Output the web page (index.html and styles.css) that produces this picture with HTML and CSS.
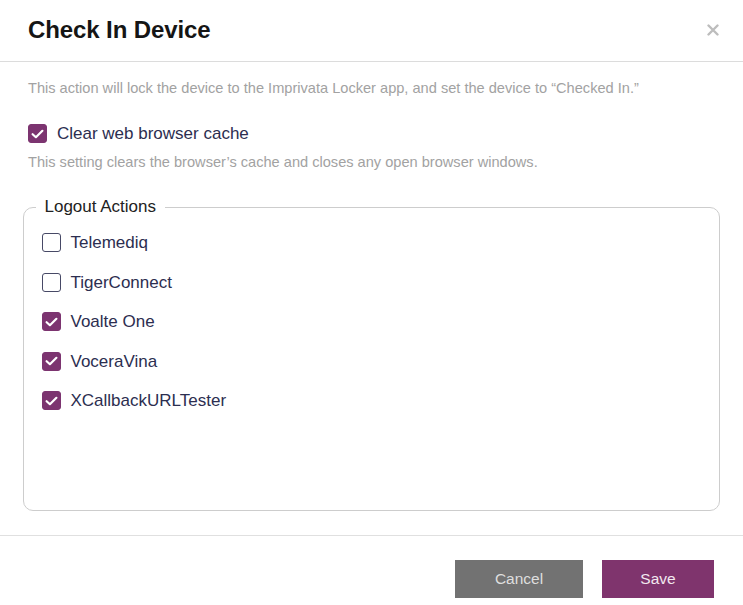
FILE: index.html
```html
<!DOCTYPE html>
<html lang="en">
<head>
<meta charset="utf-8">
<title>Check In Device</title>
<link rel="stylesheet" href="styles.css">
</head>
<body>
<div class="dialog">
  <header class="header">
    <h1 class="title">Check In Device</h1>
    <button class="close" aria-label="Close">
      <svg width="12" height="12" viewBox="0 0 12 12"><path d="M1.5 1.5 L10.5 10.5 M10.5 1.5 L1.5 10.5" stroke="#bdbdbd" stroke-width="2.4" stroke-linecap="round"/></svg>
    </button>
  </header>
  <main class="content">
    <p class="note note-top">This action will lock the device to the Imprivata Locker app, and set the device to “Checked In.”</p>
    <label class="check top-check">
      <span class="box checked"><svg width="13" height="10" viewBox="0 0 13 10"><path d="M1.6 5.2 L4.9 8.2 L11.4 1.8" fill="none" stroke="#fff" stroke-width="2.2" stroke-linecap="round" stroke-linejoin="round"/></svg></span>
      <span class="label">Clear web browser cache</span>
    </label>
    <p class="note note-help">This setting clears the browser’s cache and closes any open browser windows.</p>
    <fieldset class="group">
      <legend class="legend">Logout Actions</legend>
      <div class="list">
        <label class="check"><span class="box"></span><span class="label">Telemediq</span></label>
        <label class="check"><span class="box"></span><span class="label">TigerConnect</span></label>
        <label class="check"><span class="box checked"><svg width="13" height="10" viewBox="0 0 13 10"><path d="M1.6 5.2 L4.9 8.2 L11.4 1.8" fill="none" stroke="#fff" stroke-width="2.2" stroke-linecap="round" stroke-linejoin="round"/></svg></span><span class="label">Voalte One</span></label>
        <label class="check"><span class="box checked"><svg width="13" height="10" viewBox="0 0 13 10"><path d="M1.6 5.2 L4.9 8.2 L11.4 1.8" fill="none" stroke="#fff" stroke-width="2.2" stroke-linecap="round" stroke-linejoin="round"/></svg></span><span class="label">VoceraVina</span></label>
        <label class="check"><span class="box checked"><svg width="13" height="10" viewBox="0 0 13 10"><path d="M1.6 5.2 L4.9 8.2 L11.4 1.8" fill="none" stroke="#fff" stroke-width="2.2" stroke-linecap="round" stroke-linejoin="round"/></svg></span><span class="label">XCallbackURLTester</span></label>
      </div>
    </fieldset>
  </main>
  <footer class="footer">
    <button class="btn btn-cancel">Cancel</button>
    <button class="btn btn-save">Save</button>
  </footer>
</div>
</body>
</html>
```
FILE: styles.css
```css
* { box-sizing: border-box; }
html, body { margin: 0; padding: 0; background: #fff; }
body { font-family: "Liberation Sans", Arial, sans-serif; }
.dialog { width: 743px; height: 605px; background: #fff; }

.header {
  height: 62px;
  border-bottom: 1px solid #dcdcdc;
  display: flex;
  align-items: center;
  justify-content: space-between;
  padding: 0 24px 2px 28px;
}
.title {
  margin: 0;
  font-size: 24px;
  font-weight: bold;
  color: #151515;
  letter-spacing: -0.1px;
}
.close {
  border: 0;
  background: none;
  padding: 0;
  width: 12px;
  height: 12px;
  display: flex;
  cursor: pointer;
}

.content { padding: 17px 23px 0 28px; }
.note {
  margin: 0;
  font-size: 14.6px;
  line-height: 18px;
  color: #a2a2a2;
}
.top-check { margin-top: 27px; }
.note-help { margin-top: 10px; }

.check {
  display: flex;
  align-items: center;
  height: 19px;
  gap: 10px;
}
.box {
  width: 19px;
  height: 19px;
  border: 1.5px solid #474966;
  border-radius: 3px;
  display: flex;
  align-items: center;
  justify-content: center;
  flex: none;
  background: #fff;
}
.box.checked { background: #7c3470; border-color: #7c3470; }
.label {
  font-size: 17px;
  color: #2c2e50;
  line-height: 19px;
}

.group {
  margin: 26px 0 0 -5px;
  padding: 16px 17px 100px 17.5px;
  border: 1.5px solid #cdcdcd;
  border-radius: 10px;
}
.legend {
  margin-left: -6px;
  padding: 0 9px;
  font-size: 17px;
  line-height: 20px;
  color: #222;
}
.list {
  display: flex;
  flex-direction: column;
  gap: 20.5px;
}

.footer {
  margin-top: 24px;
  border-top: 1px solid #e0e0e0;
  display: flex;
  justify-content: flex-end;
  gap: 19px;
  padding: 24px 29px 0 0;
}
.btn {
  height: 38px;
  border: 0;
  font-family: "Liberation Sans", Arial, sans-serif;
  font-size: 15.5px;
  cursor: pointer;
}
.btn-cancel { width: 128px; background: #727272; color: #dedede; }
.btn-save { width: 112px; background: #7f346d; color: #f2e8ef; }
```
